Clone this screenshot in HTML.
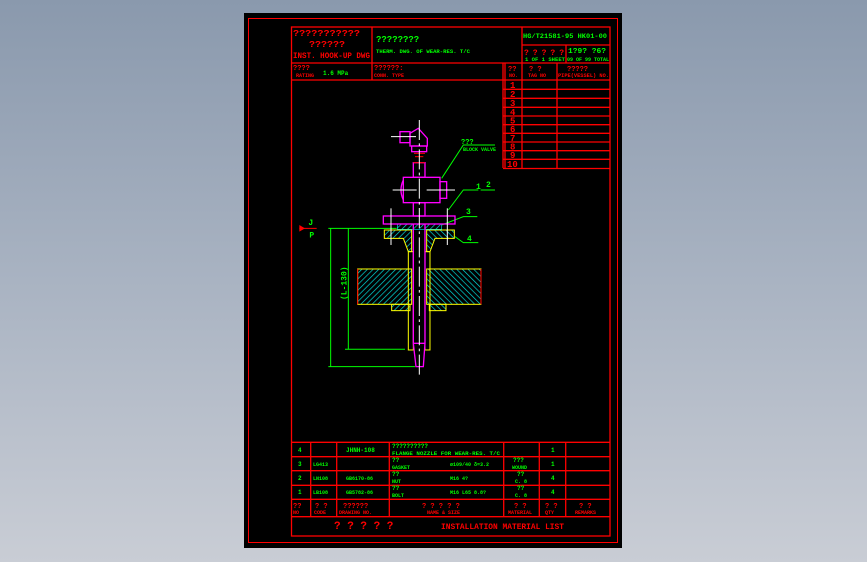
<!DOCTYPE html>
<html><head><meta charset="utf-8"><style>
html,body{margin:0;padding:0;width:867px;height:562px;overflow:hidden;background:linear-gradient(#8a99ad,#a9b3c2 50%,#c9cdd5);}
svg{position:absolute;left:0;top:0}
text{font-family:"Liberation Mono",monospace;font-weight:bold}
</style></head><body>
<svg width="867" height="562" viewBox="0 0 867 562">
<defs>
<pattern id="h" width="12" height="12" patternUnits="userSpaceOnUse" patternTransform="rotate(45)">
<line x1="0" y1="0" x2="0" y2="12" stroke="#00e0e0" stroke-width="4"/></pattern>
<pattern id="h2" width="12" height="12" patternUnits="userSpaceOnUse" patternTransform="rotate(-45)">
<line x1="0" y1="0" x2="0" y2="12" stroke="#00e0e0" stroke-width="4"/></pattern>
</defs>
<rect x="244" y="13" width="378" height="535" fill="#000"/>
<rect x="248.5" y="18.5" width="369" height="524" fill="none" stroke="#f00" stroke-width="1"/>
<g fill="none" stroke="#f00" stroke-width="1.3">
<rect x="291.5" y="27" width="318.5" height="509"/>
<line x1="291" y1="63" x2="610" y2="63"/>
<line x1="291" y1="80" x2="503" y2="80"/>
<line x1="372" y1="27" x2="372" y2="80"/>
<line x1="522" y1="27" x2="522" y2="63"/>
<line x1="522" y1="45" x2="610" y2="45"/>
<line x1="566" y1="45" x2="566" y2="63"/>
<line x1="503" y1="63" x2="503" y2="168"/>
<line x1="505" y1="63" x2="505" y2="168"/>
<line x1="522" y1="63" x2="522" y2="168"/>
<line x1="557" y1="63" x2="557" y2="168"/>
<line x1="503" y1="80" x2="610" y2="80"/>
<line x1="503" y1="89.3" x2="610" y2="89.3"/>
<line x1="503" y1="98.3" x2="610" y2="98.3"/>
<line x1="503" y1="107.3" x2="610" y2="107.3"/>
<line x1="503" y1="116" x2="610" y2="116"/>
<line x1="503" y1="124.7" x2="610" y2="124.7"/>
<line x1="503" y1="133.3" x2="610" y2="133.3"/>
<line x1="503" y1="142" x2="610" y2="142"/>
<line x1="503" y1="150.7" x2="610" y2="150.7"/>
<line x1="503" y1="159.3" x2="610" y2="159.3"/>
<line x1="503" y1="168.5" x2="610" y2="168.5"/>
<line x1="291" y1="442.3" x2="610" y2="442.3"/>
<line x1="291" y1="456.7" x2="610" y2="456.7"/>
<line x1="291" y1="470.7" x2="610" y2="470.7"/>
<line x1="291" y1="485.3" x2="610" y2="485.3"/>
<line x1="291" y1="499.3" x2="610" y2="499.3"/>
<line x1="291" y1="516.7" x2="610" y2="516.7"/>
<line x1="310.7" y1="442" x2="310.7" y2="516.7"/>
<line x1="336.7" y1="442" x2="336.7" y2="516.7"/>
<line x1="389.3" y1="442" x2="389.3" y2="516.7"/>
<line x1="503.7" y1="442" x2="503.7" y2="516.7"/>
<line x1="539.3" y1="442" x2="539.3" y2="516.7"/>
<line x1="565.7" y1="442" x2="565.7" y2="516.7"/>
</g>
<g fill="#f00" font-size="9">
<text x="293" y="36" font-size="9" textLength="67" lengthAdjust="spacingAndGlyphs">???????????</text>
<text x="309" y="47" font-size="9" textLength="36" lengthAdjust="spacingAndGlyphs">??????</text>
<text x="293" y="58" font-size="8" textLength="77" lengthAdjust="spacingAndGlyphs">INST. HOOK-UP DWG</text>
<text x="293" y="70" font-size="7">????</text>
<text x="374" y="70" font-size="7">??????:</text>
<text x="296" y="77" font-size="5">RATING</text>
<text x="374" y="77" font-size="5">CONN. TYPE</text>
<text x="508" y="71" font-size="7">??</text>
<text x="509" y="77" font-size="5">NO.</text>
<text x="529" y="71" font-size="7">?  ?</text>
<text x="528" y="77" font-size="5">TAG NO</text>
<text x="567" y="71" font-size="7">?????</text>
<text x="558" y="77" font-size="5" textLength="51" lengthAdjust="spacingAndGlyphs">PIPE(VESSEL) NO.</text>
<text x="524" y="55" font-size="8" textLength="40" lengthAdjust="spacing">? ? ? ? ?</text>
<g font-size="9" font-family="Liberation Sans">
<text x="510" y="88">1</text><text x="510" y="97">2</text><text x="510" y="106">3</text><text x="510" y="115">4</text><text x="510" y="123.5">5</text><text x="510" y="132">6</text><text x="510" y="141">7</text><text x="510" y="149.5">8</text><text x="510" y="158">9</text><text x="507" y="167">10</text></g>
<text x="293" y="508" font-size="7">??</text><text x="293" y="514" font-size="5">NO</text>
<text x="315" y="508" font-size="7">? ?</text><text x="314" y="514" font-size="5">CODE</text>
<text x="343" y="508" font-size="7">??????</text><text x="339" y="514" font-size="5">DRAWING NO.</text>
<text x="422" y="508" font-size="7">? ? ? ? ?</text><text x="427" y="514" font-size="5">NAME &amp; SIZE</text>
<text x="514" y="508" font-size="7">? ?</text><text x="508" y="514" font-size="5">MATERIAL</text>
<text x="545" y="508" font-size="7">? ?</text><text x="545" y="514" font-size="5">QTY</text>
<text x="579" y="508" font-size="7">?   ?</text><text x="575" y="514" font-size="5">REMARKS</text>
<text x="334" y="529" font-size="11">?  ?  ?  ?  ?</text>
<text x="441" y="529" font-size="8.5" textLength="123" lengthAdjust="spacingAndGlyphs">INSTALLATION MATERIAL LIST</text>
</g>
<g fill="#0f0" font-size="6">
<text x="376" y="42" font-size="9">????????</text>
<text x="376" y="53" font-size="5" textLength="94" lengthAdjust="spacingAndGlyphs">THERM. DWG. OF WEAR-RES.  T/C</text>
<text x="523" y="38" font-size="6.5" textLength="84" lengthAdjust="spacingAndGlyphs">HG/T21581-95  HK01-00</text>
<text x="525" y="61" font-size="5" textLength="40" lengthAdjust="spacingAndGlyphs">1 OF 1 SHEET</text>
<text x="568" y="53" font-size="7.5" textLength="38" lengthAdjust="spacingAndGlyphs">1?9? ?6?</text>
<text x="567" y="61" font-size="5" textLength="42" lengthAdjust="spacingAndGlyphs">09 OF 99 TOTAL</text>
<text x="323" y="75" font-size="6">1.6 MPa</text>
<text x="461" y="144" font-size="7">???</text>
<text x="463" y="151" font-size="5">BLOCK VALVE</text>
<text x="476" y="189" font-size="8">1</text><text x="486" y="187" font-size="8">2</text>
<text x="466" y="214" font-size="8">3</text>
<text x="467" y="241" font-size="8">4</text>
<text x="298" y="452" font-size="6">4</text>
<text x="346" y="452" font-size="6">JHNH-108</text>
<text x="392" y="448" font-size="6">??????????</text>
<text x="392" y="455" font-size="5" textLength="108" lengthAdjust="spacingAndGlyphs">FLANGE NOZZLE FOR WEAR-RES. T/C</text>
<text x="551" y="452" font-size="6">1</text>
<text x="298" y="466" font-size="6">3</text>
<text x="313" y="466" font-size="5">LG413</text>
<text x="392" y="462" font-size="6">??</text><text x="392" y="469" font-size="5">GASKET</text>
<text x="450" y="466" font-size="5">ø109/40  δ=3.2</text>
<text x="513" y="462" font-size="6">???</text><text x="512" y="469" font-size="5">WOUND</text>
<text x="551" y="466" font-size="6">1</text>
<text x="298" y="480" font-size="6">2</text>
<text x="313" y="480" font-size="5">LN108</text>
<text x="346" y="480" font-size="5">GB6170-86</text>
<text x="392" y="476" font-size="6">??</text><text x="392" y="483" font-size="5">NUT</text>
<text x="450" y="480" font-size="5">M16  4?</text>
<text x="517" y="476" font-size="6">??</text><text x="515" y="483" font-size="5">C. 8</text>
<text x="551" y="480" font-size="6">4</text>
<text x="298" y="494" font-size="6">1</text>
<text x="313" y="494" font-size="5">LB108</text>
<text x="346" y="494" font-size="5">GB5782-86</text>
<text x="392" y="490" font-size="6">??</text><text x="392" y="497" font-size="5">BOLT</text>
<text x="450" y="494" font-size="5">M16 L65  8.8?</text>
<text x="517" y="490" font-size="6">??</text><text x="515" y="497" font-size="5">C. 8</text>
<text x="551" y="494" font-size="6">4</text>
</g>
<g transform="translate(290,120) scale(0.3333)">
<g stroke="#0f0" stroke-width="3" fill="none">
<line x1="115" y1="325" x2="320" y2="325"/><line x1="165" y1="688" x2="345" y2="688"/><line x1="115" y1="740" x2="375" y2="740"/>
<line x1="122" y1="325" x2="122" y2="740"/><line x1="175" y1="325" x2="175" y2="688"/>
<polyline points="455,175 520,75 615,75"/><polyline points="475,270 520,210 565,210"/><line x1="572" y1="210" x2="615" y2="210"/>
<polyline points="455,315 520,290 562,290"/><polyline points="495,350 520,368 565,368"/>
</g>
<text x="0" y="0" fill="#0f0" font-size="24" transform="translate(170,540) rotate(-90)">(L-130)</text>
<text x="55" y="315" fill="#0f0" font-size="24">J</text><text x="58" y="352" fill="#0f0" font-size="24">P</text>
<polygon points="28,315 45,325 28,335" fill="#f00"/><line x1="28" y1="325" x2="80" y2="325" stroke="#f00" stroke-width="3"/>
<g stroke="#ffff00" stroke-width="3">
<polygon points="283,330 365,330 365,395 355,395 340,355 283,355" fill="url(#h)"/>
<polygon points="493,330 410,330 410,395 420,395 435,355 493,355" fill="url(#h2)"/>
<rect x="203" y="447" width="162" height="106" fill="url(#h)"/>
<rect x="410" y="447" width="163" height="106" fill="url(#h2)"/>
<rect x="305" y="553" width="55" height="19" fill="url(#h)"/>
<rect x="418" y="553" width="50" height="19" fill="url(#h2)"/>
<rect x="355" y="395" width="15" height="295" fill="none"/>
<rect x="405" y="395" width="15" height="295" fill="none"/>
</g>
<line x1="203" y1="447" x2="203" y2="553" stroke="#f00" stroke-width="3"/><line x1="573" y1="447" x2="573" y2="553" stroke="#f00" stroke-width="3"/>
<rect x="322" y="312" width="133" height="16" fill="url(#h)" stroke="#00e0e0" stroke-width="2"/>
<g stroke="#f0f" stroke-width="4" fill="none">
<rect x="330" y="35" width="30" height="33"/>
<polygon points="360,40 385,25 412,55 412,78 360,78"/>
<rect x="365" y="78" width="45" height="17"/>
<rect x="370" y="128" width="35" height="44"/>
<rect x="340" y="172" width="110" height="76"/>
<path d="M340 180 Q326 210 340 240"/>
<rect x="450" y="185" width="20" height="50"/>
<rect x="370" y="248" width="35" height="40"/>
<rect x="280" y="288" width="215" height="24"/>
<polyline points="370,312 370,670 378,740 400,740 405,670 405,312"/>
<line x1="370" y1="670" x2="405" y2="670"/>
</g>
<g stroke="#f00" stroke-width="3"><line x1="372" y1="100" x2="405" y2="100"/><line x1="375" y1="110" x2="400" y2="110"/><line x1="370" y1="128" x2="405" y2="128"/></g>
<g stroke="#fff" stroke-width="3">
<line x1="388" y1="0" x2="388" y2="770" stroke-dasharray="60 10 8 10"/>
<line x1="303" y1="50" x2="378" y2="50"/>
<line x1="308" y1="210" x2="380" y2="210"/><line x1="410" y1="210" x2="495" y2="210"/>
<line x1="303" y1="265" x2="303" y2="375"/><line x1="472" y1="265" x2="472" y2="375"/>
</g>
</g>
</svg>
</body></html>
